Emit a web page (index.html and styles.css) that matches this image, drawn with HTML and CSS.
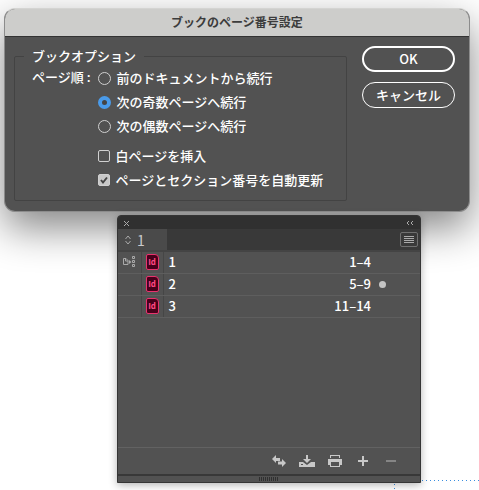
FILE: index.html
```html
<!DOCTYPE html>
<html lang="ja">

<head>
    <meta charset="UTF-8">
    <meta name="viewport" content="width=device-width, initial-scale=1.0">
    <title>ブックのページ番号設定</title>
    <link rel="stylesheet" href="styles.css">
</head>

<body>
    <form class="dialog">
        <h1 class="dialog-title">ブックのページ番号設定</h1>
        <div class="dialog-body">
            <fieldset class="options">
                <legend>ブックオプション</legend>
                <div class="order">
                    <span class="order-label" id="order-label">ページ順 :</span>
                    <div class="choices" role="radiogroup" aria-labelledby="order-label">
                        <label><input type="radio" name="order">前のドキュメントから続行</label>
                        <label><input type="radio" name="order" checked>次の奇数ページへ続行</label>
                        <label><input type="radio" name="order">次の偶数ページへ続行</label>
                    </div>
                    <div class="choices checks">
                        <label><input type="checkbox" name="blank">白ページを挿入</label>
                        <label><input type="checkbox" name="auto" checked>ページとセクション番号を自動更新</label>
                    </div>
                </div>
            </fieldset>
            <div class="actions">
                <button type="button" class="primary">OK</button>
                <button type="button">キャンセル</button>
            </div>
        </div>
    </form>

    <div class="workspace">
        <section class="panel">
            <div class="panel-top">
                <button type="button" aria-label="閉じる">
                    <svg width="7" height="7" viewBox="0 0 7 7"><path d="M1 1l5 5M6 1L1 6" /></svg>
                </button>
                <button type="button" aria-label="折りたたむ">
                    <svg width="8" height="6" viewBox="0 0 8 6"><path d="M3 1L1 3l2 2M7 1L5 3l2 2" /></svg>
                </button>
            </div>
            <div class="tabs">
                <button type="button" class="tab">
                    <svg width="6" height="10" viewBox="0 0 6 10"><path d="M.5 4L3 1l2.500 3M.5 6L3 9l2.500-3" /></svg>
                    1
                </button>
                <button type="button" class="menu" aria-label="メニュー">
                    <svg width="10" height="8" viewBox="0 0 10 8"><path d="M0 .5h10M0 2.500h10M0 4.500h10M0 6.500h10" /></svg>
                </button>
            </div>
            <table class="documents">
                <tr>
                    <td class="source">
                        <svg width="13" height="12" viewBox="0 0 13 12">
                            <path d="M.5 2.500h2.500l2 2v4H.5zM2.500 2.500v2.500H5M9.500 .5h2v2h-2zM9.500 4.500h2v2h-2zM9.500 8.500h2v2h-2z" />
                            <path class="solid" d="M6 4l2.500 2L6 8z" />
                        </svg>
                    </td>
                    <td class="type"><span class="id-icon">Id</span></td>
                    <td class="name">1</td>
                    <td class="pages">1–4</td>
                    <td class="status"></td>
                </tr>
                <tr>
                    <td class="source"></td>
                    <td class="type"><span class="id-icon">Id</span></td>
                    <td class="name">2</td>
                    <td class="pages">5–9</td>
                    <td class="status"><span class="dot"></span></td>
                </tr>
                <tr>
                    <td class="source"></td>
                    <td class="type"><span class="id-icon">Id</span></td>
                    <td class="name">3</td>
                    <td class="pages">11–14</td>
                    <td class="status"></td>
                </tr>
            </table>
            <div class="toolbar">
                <button type="button" aria-label="同期">
                    <svg width="14" height="12" viewBox="0 0 14 12"><path d="M0 4l4-4v3h4v3H4v2zM14 8l-4 4V9.500H6v-3h4V4z" /></svg>
                </button>
                <button type="button" aria-label="保存">
                    <svg width="16" height="12" viewBox="0 0 16 12"><path d="M7 0h2v4h3L8 8 4 4h3zM0 7h4l4 3 4-3h4v5H0zM2 9v1h2V9z" fill-rule="evenodd" /></svg>
                </button>
                <button type="button" aria-label="プリント">
                    <svg width="14" height="12" viewBox="0 0 14 12"><path d="M2 0h10v3H2zM3 1v2h8V1zM0 4h14v6h-2v2H2v-2H0zM3 7v4h8V7z" fill-rule="evenodd" /></svg>
                </button>
                <button type="button" aria-label="追加">
                    <svg width="10" height="10" viewBox="0 0 10 10"><path d="M4 0h2v4h4v2H6v4H4V6H0V4h4z" /></svg>
                </button>
                <button type="button" class="off" aria-label="削除">
                    <svg width="10" height="10" viewBox="0 0 10 10"><path d="M0 4h10v2H0z" /></svg>
                </button>
            </div>
            <div class="grip"><span></span></div>
        </section>
        <div class="guide"></div>
    </div>
</body>

</html>
```

FILE: styles.css
```css
* {
    padding: 0;
    margin: 0;
    box-sizing: border-box;
}

body {
    display: flow-root;
    min-height: 100vh;
    background-color: white;
    color: white;
    font-family: "Noto Sans CJK JP", sans-serif;
    font-size: 13px;
    font-weight: 500;
    overflow: hidden;
}

button {
    background: none;
    border: none;
    color: inherit;
    font: inherit;
}

svg {
    display: block;
}

.dialog {
    margin: 8px 9px 0 4px;
    background-color: #525252;
    border: 1px solid #8c8c8c;
    border-top-color: #d4d4d2;
    border-radius: 11px;
    overflow: hidden;
    box-shadow: 0 16px 40px rgba(0, 0, 0, 0.48);
}

.dialog-title {
    height: 28px;
    background-color: #cdcdcb;
    border-bottom: 1px solid #333;
    color: #3c3c3c;
    font-size: 12px;
    font-weight: 700;
    line-height: 25px;
    text-align: center;
}

.dialog-body {
    display: flex;
    justify-content: space-between;
    gap: 15px;
    padding: 9px 14px 10px 9px;
}

.options {
    flex: 1;
    min-width: 0;
    border: 1px solid #434343;
    border-radius: 2px;
    padding: 0 0 8px 17px;
}

.options legend {
    margin-left: -8px;
    padding: 0 8px;
    line-height: 20px;
}

.order {
    display: grid;
    grid-template-columns: auto 1fr;
    column-gap: 7px;
    line-height: 22px;
    white-space: nowrap;
}

.choices label {
    display: flex;
    align-items: center;
    gap: 6px;
    height: 24px;
}

.checks {
    grid-column: 2;
    margin-top: 6px;
}

.choices input {
    appearance: none;
    width: 13px;
    height: 13px;
    border: 1px solid #d0d0d0;
    border-radius: 50%;
}

.choices input[type="radio"]:checked {
    border: 4px solid #4a9bea;
    background-color: #444;
}

.choices input[type="checkbox"] {
    width: 12px;
    height: 12px;
    border-radius: 2px;
}

.choices input[type="checkbox"]:checked {
    background: #c8c8c8 url("data:image/svg+xml,%3Csvg xmlns='http://www.w3.org/2000/svg' viewBox='0 0 10 10'%3E%3Cpath d='M2 5l2 2.500L8 2.500' fill='none' stroke='%23444' stroke-width='2'/%3E%3C/svg%3E") center / 10px 10px no-repeat;
}

.actions {
    display: flex;
    flex-direction: column;
    gap: 10px;
    width: 93px;
}

.actions button {
    height: 26px;
    border: 1px solid white;
    border-radius: 13px;
    line-height: 22px;
}

.actions .primary {
    border-width: 2px;
}

.workspace {
    display: flex;
    align-items: flex-end;
    padding: 3px 0 0 117px;
}

.panel {
    flex: 0 0 304px;
    position: relative;
    background-color: #525252;
    border: 1px solid #353535;
    border-radius: 4px 4px 0 0;
    box-shadow: 0 2px 8px rgba(0, 0, 0, 0.3);
}

.panel-top {
    display: flex;
    justify-content: space-between;
    align-items: center;
    height: 13px;
    padding: 1px 6px 0 5px;
    background-color: #303030;
    border-radius: 3px 3px 0 0;
}

.panel-top svg,
.tabs svg,
.source svg {
    fill: none;
    stroke: #aaa;
}

.tabs {
    display: flex;
    justify-content: space-between;
    align-items: center;
    height: 21px;
    padding-right: 2px;
    background-color: #393939;
}

.tab {
    display: flex;
    align-items: center;
    gap: 6px;
    width: 49px;
    height: 21px;
    padding-left: 7px;
    background-color: #4a4a4a;
    color: #ccc;
    font-size: 14px;
    font-weight: 400;
    line-height: 20px;
}

.menu {
    display: flex;
    align-items: center;
    justify-content: center;
    width: 18px;
    height: 15px;
    border: 1px solid #707070;
    border-radius: 2px;
}

.documents {
    width: 100%;
    border-collapse: collapse;
    border-top: 2px solid #444;
    table-layout: fixed;
}

.documents td {
    height: 22px;
    border-bottom: 1px solid #5e5e5e;
    line-height: 20px;
}

.documents .source {
    width: 23px;
    padding-left: 5px;
    border-right: 1px solid #464646;
}

.source .solid {
    fill: #aaa;
    stroke: none;
}

.documents .type {
    width: 22px;
    padding-left: 4px;
    border-right: 1px solid #464646;
}

.documents .name {
    padding-left: 5px;
}

.documents .pages {
    width: 80px;
    text-align: right;
}

.documents .status {
    width: 49px;
    padding-left: 8px;
}

.id-icon {
    display: block;
    width: 13px;
    height: 16px;
    background-color: #48001b;
    border: 1px solid #e8336e;
    border-radius: 2px 4px 2px 2px;
    color: #ff4a84;
    font-family: "Open Sans", sans-serif;
    font-size: 8px;
    font-weight: 700;
    line-height: 13px;
    text-align: center;
}

.dot {
    display: block;
    width: 7px;
    height: 7px;
    border-radius: 50%;
    background-color: #c4c4c4;
}

.toolbar {
    display: flex;
    justify-content: flex-end;
    align-items: center;
    gap: 13px;
    height: 27px;
    margin-top: 129px;
    padding-right: 22px;
    border-top: 1px solid #626262;
}

.toolbar button {
    display: flex;
    justify-content: center;
    width: 15px;
}

.toolbar svg {
    flex: none;
    fill: #c8c8c8;
}

.toolbar .off svg {
    fill: #858585;
}

.grip {
    display: flex;
    justify-content: center;
    height: 8px;
    padding-top: 1px;
    border-top: 2px solid #383838;
}

.grip span {
    width: 20px;
    height: 4px;
    background: repeating-linear-gradient(to right, #303030 0 1px, #525252 1px 2px);
}

/* dotted text frame that starts behind the panel */
.guide {
    flex: 1;
    height: 10px;
    margin: 0 0 -7px -27px;
    background:
        repeating-linear-gradient(to right, #3a8ee0 0 1px, transparent 1px 4px) top / 100% 1px no-repeat,
        repeating-linear-gradient(to bottom, #3a8ee0 0 1px, transparent 1px 4px) left / 1px 100% no-repeat;
}
```
